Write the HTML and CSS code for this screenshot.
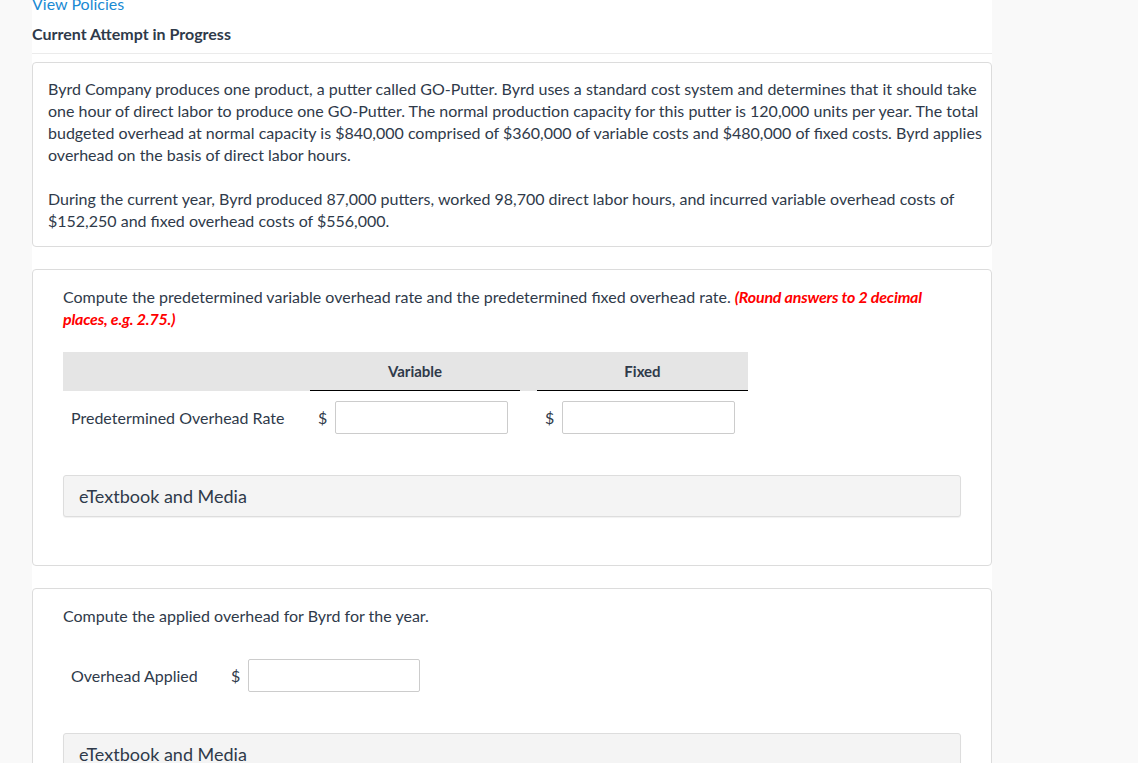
FILE: index.html
```html
<!DOCTYPE html>
<html lang="en">
<head>
    <meta charset="UTF-8">
    <title>Current Attempt in Progress</title>
    <link rel="stylesheet" href="styles.css">
</head>
<body>
    <div class="page">
        <a href="#" class="policies">View Policies</a>
        <h1 class="attempt">Current Attempt in Progress</h1>

        <div class="card intro">
            <p>Byrd Company produces one product, a putter called GO-Putter. Byrd uses a standard cost system and determines that it should take one hour of direct labor to produce one GO-Putter. The normal production capacity for this putter is 120,000 units per year. The total budgeted overhead at normal capacity is $840,000 comprised of $360,000 of variable costs and $480,000 of fixed costs. Byrd applies overhead on the basis of direct labor hours.</p>
            <p>During the current year, Byrd produced 87,000 putters, worked 98,700 direct labor hours, and incurred variable overhead costs of $152,250 and fixed overhead costs of $556,000.</p>
        </div>

        <div class="card question">
            <p class="prompt">Compute the predetermined variable overhead rate and the predetermined fixed overhead rate. <span class="hint">(Round answers to 2 decimal places, e.g. 2.75.)</span></p>

            <div class="grid">
                <div class="grid-head">
                    <div class="cell-label"></div>
                    <div class="col-head">Variable</div>
                    <div class="col-gap"></div>
                    <div class="col-head">Fixed</div>
                </div>
                <div class="grid-row">
                    <div class="cell-label">Predetermined Overhead Rate</div>
                    <div class="cell-input"><span class="dollar">$</span><input type="text"></div>
                    <div class="col-gap"></div>
                    <div class="cell-input"><span class="dollar">$</span><input type="text"></div>
                </div>
            </div>

            <div class="media">eTextbook and Media</div>
        </div>

        <div class="card question">
            <p class="prompt">Compute the applied overhead for Byrd for the year.</p>

            <div class="applied-row">
                <div class="applied-label">Overhead Applied</div>
                <div class="cell-input"><span class="dollar">$</span><input type="text"></div>
            </div>

            <div class="media">eTextbook and Media</div>
        </div>
    </div>
</body>
</html>
```

FILE: styles.css
```css
* {
    margin: 0;
    padding: 0;
    box-sizing: border-box;
    font-family: 'Lato', 'Liberation Sans', sans-serif;
}

body {
    background-color: #f9f9f9;
    color: #2f3a4a;
    font-size: 16px;
    overflow: hidden;
}

.page {
    width: 960px;
    margin-left: 32px;
    min-height: 100vh;
    background: #fff;
}

.policies {
    display: block;
    margin-top: -6px;
    font-size: 16px;
    line-height: 20px;
    color: #1a8ad3;
    text-decoration: none;
}

.attempt {
    margin-top: 10px;
    padding-bottom: 9px;
    border-bottom: 1px solid #ebebeb;
    font-size: 16px;
    line-height: 20px;
    font-weight: bold;
    color: #2f3a4a;
}

.card {
    background: #fff;
    border: 1px solid #dcdcdc;
    border-radius: 4px;
}

.intro {
    margin-top: 8px;
    padding: 15px 4px 14px 15px;
    line-height: 22px;
}

.intro p + p {
    margin-top: 22px;
}

.question {
    margin-top: 22px;
    padding: 16px 30px 48px;
}

.prompt {
    line-height: 22px;
}

.hint {
    color: #ff0000;
    font-weight: bold;
    font-style: italic;
    letter-spacing: -0.2px;
}

.grid {
    margin-top: 22px;
    width: 685px;
}

.grid-head {
    display: flex;
    height: 39px;
    background: #e5e5e5;
}

.grid-head .cell-label {
    width: 247px;
}

.col-head {
    width: 210px;
    border-bottom: 1px solid #000;
    font-size: 15px;
    font-weight: bold;
    text-align: center;
    line-height: 38px;
}

.col-head:last-child {
    width: 211px;
}

.col-gap {
    width: 17px;
}

.grid-row {
    display: flex;
    align-items: center;
    padding-top: 10px;
}

.grid-row .cell-label {
    width: 247px;
    padding-left: 8px;
}

.cell-input {
    display: flex;
    align-items: center;
    width: 210px;
    padding-left: 8px;
}

.dollar {
    width: 17px;
}

input {
    width: 173px;
    height: 33px;
    border: 1px solid #cccccc;
    border-radius: 2px;
    background: #fff;
    outline: none;
}

.media {
    margin-top: 41px;
    height: 42px;
    padding-left: 15px;
    background: #f4f4f4;
    border: 1px solid #dddddd;
    border-radius: 3px;
    box-shadow: 0 1px 1px rgba(0, 0, 0, 0.06);
    font-size: 18px;
    line-height: 40px;
}

.applied-row {
    display: flex;
    align-items: center;
    margin-top: 32px;
}

.applied-label {
    width: 160px;
    padding-left: 8px;
}

.applied-row .cell-input {
    width: auto;
}

.applied-row input {
    width: 172px;
}
```
